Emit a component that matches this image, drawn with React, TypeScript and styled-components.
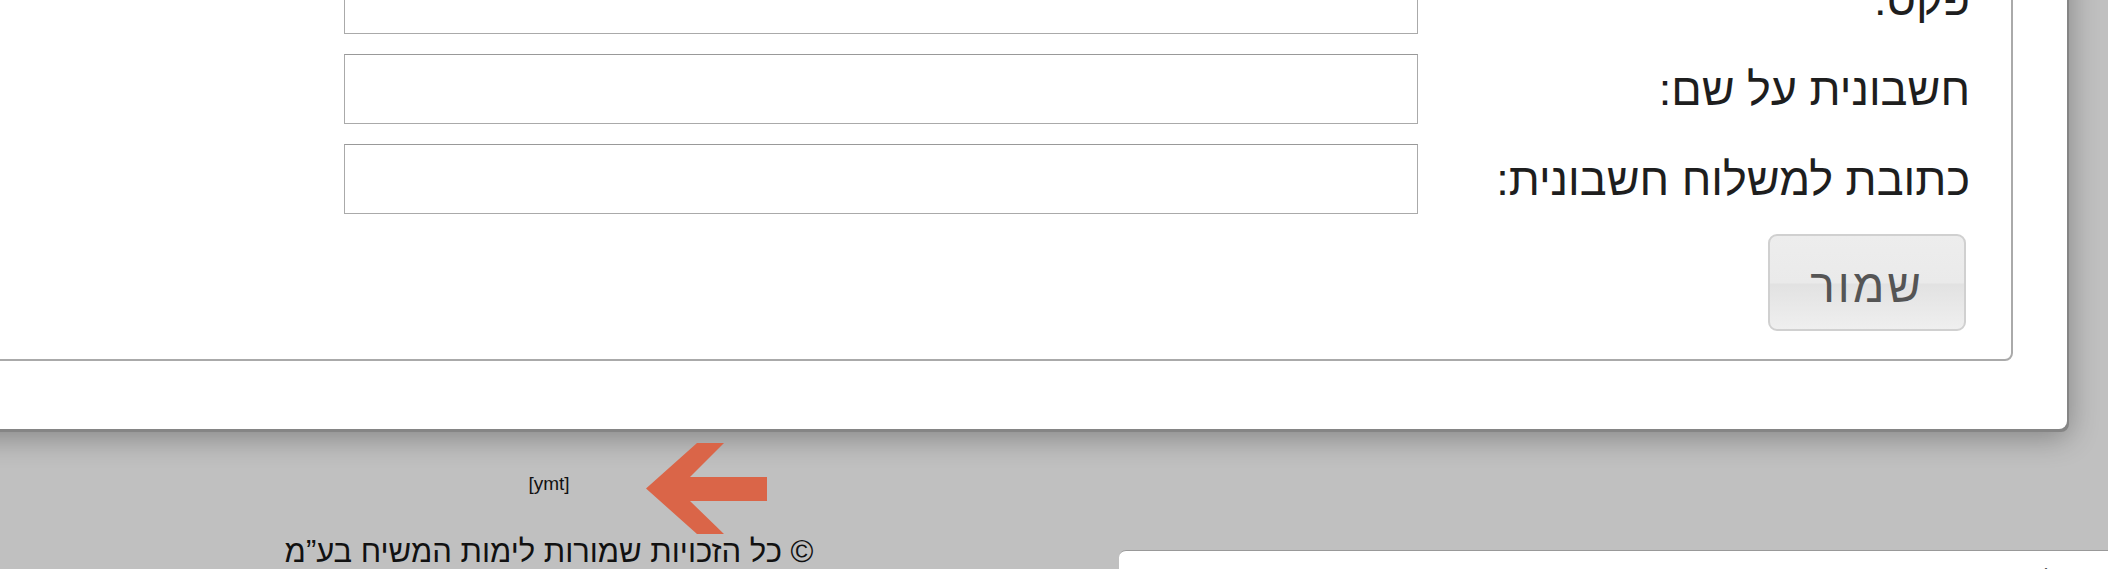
import styled, { createGlobalStyle } from 'styled-components';

const GlobalStyle = createGlobalStyle`
  html, body {
    margin: 0;
    padding: 0;
    overflow: hidden;
    background: #c0c0c0;
  }
  body {
    font-family: "Liberation Sans", Arial, sans-serif;
  }
`;

// the page is shown scrolled part-way down the form
const Page = styled.div`
  margin-top: -168px;
`;

const Stage = styled.div`
  display: flex;
  justify-content: flex-end;
  padding-right: 41px;
`;

const Card = styled.div`
  flex-shrink: 0;
  width: 2400px;
  box-sizing: border-box;
  background: #fff;
  border-radius: 8px;
  padding: 20px 54px 68px 0;
  box-shadow: 2px 3px 0 #858585, 2px 8px 30px rgba(0, 0, 0, 0.32);
  direction: rtl;
`;

const Panel = styled.div`
  border: 2px solid #aaa;
  border-radius: 8px;
  padding: 20px 41px 28px 0;
`;

const Row = styled.div`
  display: flex;
  align-items: center;
  margin-bottom: 20px;
`;

const Label = styled.label`
  width: 552px;
  flex-shrink: 0;
  font-size: 45px;
  color: #1e1e1e;
  padding-top: 2px;
  white-space: nowrap;
`;

const Field = styled.input`
  width: 1074px;
  height: 70px;
  box-sizing: border-box;
  border: 1px solid #aaa;
  border-top-color: #999;
  background: #fff;
  font-size: 24px;
  padding: 0 10px;
`;

const SaveButton = styled.button`
  width: 198px;
  height: 97px;
  margin-right: 4px;
  border: 2px solid #d0d0d0;
  border-radius: 9px;
  background: linear-gradient(#ededed 0%, #eaeaea 50%, #e2e2e2 52%, #efefef 100%);
  color: #555;
  font-family: "Liberation Sans", Arial, sans-serif;
  font-size: 46px;
  letter-spacing: 3px;
  padding: 6px 0 0;
  cursor: pointer;
`;

const Footer = styled.div`
  display: flex;
  align-items: flex-start;
`;

const FooterMain = styled.div`
  width: 1098px;
  flex-shrink: 0;
  padding-top: 14px;
`;

const CreditRow = styled.div`
  display: grid;
  grid-template-columns: 1fr auto 1fr;
  align-items: start;
`;

const Credit = styled.span`
  grid-column: 2;
  margin-top: 30px;
  font-size: 19px;
  color: #111;
`;

const Pointer = styled.svg`
  grid-column: 3;
  margin-left: 76px;
  display: block;
`;

const Copyright = styled.div`
  direction: rtl;
  text-align: center;
  font-size: 31px;
  color: #111;
  margin-top: -1px;
  white-space: nowrap;
`;

const SideBox = styled.div`
  flex-shrink: 0;
  width: 1100px;
  margin: 121px 0 0 21px;
  background: #fff;
  border-top: 1px solid #999;
  border-radius: 7px 7px 0 0;
  direction: rtl;
  padding: 15px 163px 0 0;
  box-sizing: border-box;
  height: 80px;
`;

const SideTitle = styled.div`
  font-size: 22px;
  color: #222;
`;

const rows = ['טלפון:', 'פקס:', 'חשבונית על שם:', 'כתובת למשלוח חשבונית:'];

export default function App() {
  return (
    <>
      <GlobalStyle />
      <Page>
        <Stage>
          <Card>
            <Panel>
              {rows.map((r) => (
                <Row key={r}>
                  <Label>{r}</Label>
                  <Field type="text" />
                </Row>
              ))}
              <SaveButton>שמור</SaveButton>
            </Panel>
          </Card>
        </Stage>
        <Footer>
          <FooterMain>
            <CreditRow>
              <Credit>[ymt]</Credit>
              <Pointer width="121" height="92" viewBox="0 0 121 92">
                <polygon
                  points="0,45.5 51,0 78,0 44,34 121,34 121,58 44,58 78,91 51,91"
                  fill="#da6548"
                />
              </Pointer>
            </CreditRow>
            <Copyright>© כל הזכויות שמורות לימות המשיח בע”מ</Copyright>
          </FooterMain>
          <SideBox>
            <SideTitle>לוח אירועים</SideTitle>
          </SideBox>
        </Footer>
      </Page>
    </>
  );
}
